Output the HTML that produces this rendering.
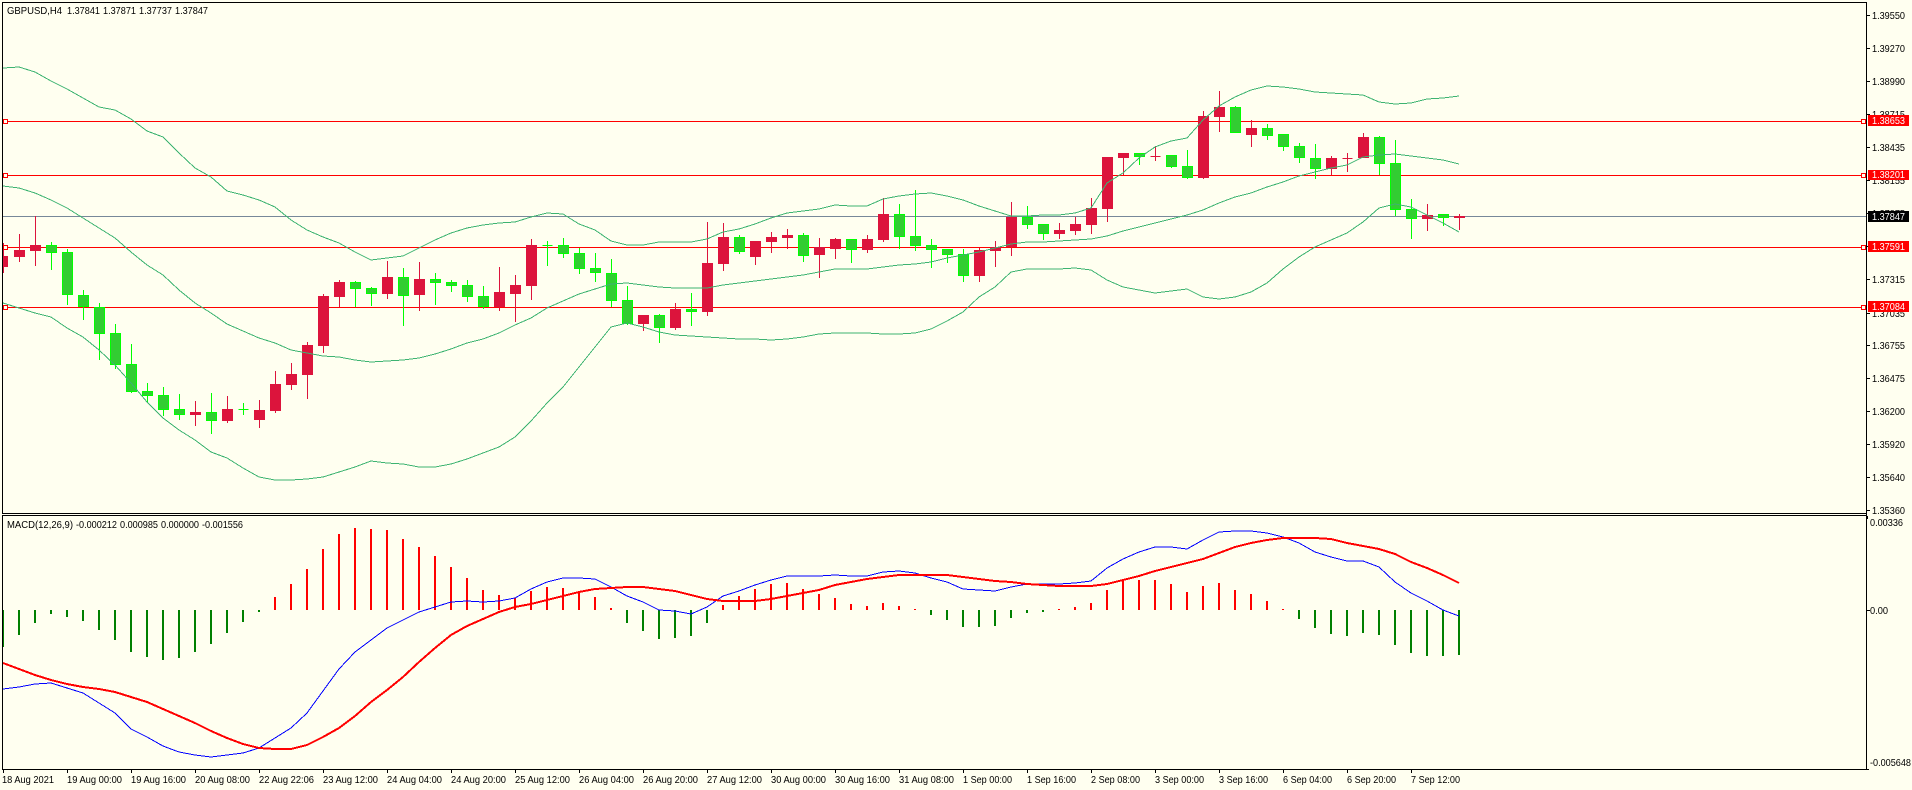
<!DOCTYPE html>
<html><head><meta charset="utf-8"><title>GBPUSD,H4</title>
<style>
html,body{margin:0;padding:0;width:1912px;height:790px;overflow:hidden;background:#FFFFF0}
svg{display:block}
text{font-family:"Liberation Sans",sans-serif;font-size:10.5px;fill:#000}
.w{fill:#fff}
</style></head><body>
<svg width="1912" height="790" viewBox="0 0 1912 790" xmlns="http://www.w3.org/2000/svg">
<rect width="1912" height="790" fill="#FFFFF0"/>
<g shape-rendering="crispEdges">
<!-- horizontal lines -->
<path d="M3 216.5H1866" stroke="#778899" fill="none"/>
<path d="M3 121.5H1866M3 175.5H1866M3 247.5H1866M3 307.5H1866" stroke="#FF0000" fill="none"/>
<!-- wicks -->
<path stroke="#00FF00" fill="none" d="M51.5 242V270M67.5 249V305M83.5 290V320M99.5 303V360M115.5 324V369M131.5 344V393M147.5 383V403M163.5 387V416M179.5 394V420M211.5 393V434M243.5 403V415M355.5 281V307M371.5 287V306M403.5 268V326M435.5 273V305M451.5 280V292M467.5 280V302M483.5 286V309M547.5 241V266M563.5 238V258M579.5 248V274M595.5 253V282M611.5 259V307M627.5 286V325M659.5 314V343M691.5 293V326M739.5 235V254M803.5 233V262M851.5 239V263M899.5 204V249M915.5 190V251M931.5 239V268M947.5 249V263M963.5 249V282M1027.5 206V229M1043.5 224V240M1139.5 153V165M1171.5 155V168M1187.5 150V179M1235.5 106V133M1267.5 124V140M1283.5 134V151M1299.5 143V163M1315.5 144V179M1379.5 136V175M1395.5 140V216M1411.5 199V239M1443.5 214V226"/>
<path stroke="#DC143C" fill="none" d="M3.5 243V273M19.5 234V262M35.5 216V266M195.5 401V426M227.5 396V423M259.5 400V428M275.5 371V413M291.5 363V390M307.5 342V399M323.5 294V353M339.5 280V307M387.5 261V299M419.5 262V311M499.5 267V311M515.5 275V322M531.5 239V300M643.5 315V331M675.5 303V330M707.5 222V316M723.5 223V271M755.5 241V265M771.5 232V253M787.5 229V249M819.5 238V278M835.5 238V259M867.5 235V253M883.5 198V242M979.5 248V282M995.5 241V267M1011.5 202V256M1059.5 223V239M1075.5 217V235M1091.5 198V234M1107.5 157V222M1123.5 153V175M1155.5 146V161M1203.5 111V179M1219.5 91V132M1251.5 120V147M1331.5 156V175M1347.5 153V172M1363.5 133V158M1427.5 204V231M1459.5 214V230"/>
<!-- green bodies -->
<path stroke="#00FF00" fill="#32CD32" d="M46.5 245.5h10V252.5h-10zM62.5 252.5h10V294.5h-10zM78.5 295.5h10V306.5h-10zM94.5 307.5h10V333.5h-10zM110.5 333.5h10V364.5h-10zM126.5 364.5h10V391.5h-10zM142.5 391.5h10V395.5h-10zM158.5 395.5h10V409.5h-10zM174.5 409.5h10V414.5h-10zM206.5 412.5h10V420.5h-10zM238.5 409.5h10zM350.5 282.5h10V288.5h-10zM366.5 288.5h10V293.5h-10zM398.5 277.5h10V295.5h-10zM430.5 279.5h10V282.5h-10zM446.5 282.5h10V285.5h-10zM462.5 285.5h10V296.5h-10zM478.5 296.5h10V306.5h-10zM542.5 245.5h10zM558.5 245.5h10V253.5h-10zM574.5 253.5h10V268.5h-10zM590.5 268.5h10V272.5h-10zM606.5 273.5h10V300.5h-10zM622.5 300.5h10V323.5h-10zM654.5 315.5h10V327.5h-10zM686.5 309.5h10V311.5h-10zM734.5 237.5h10V251.5h-10zM798.5 235.5h10V255.5h-10zM846.5 239.5h10V249.5h-10zM894.5 214.5h10V236.5h-10zM910.5 236.5h10V245.5h-10zM926.5 245.5h10V249.5h-10zM942.5 249.5h10V254.5h-10zM958.5 254.5h10V275.5h-10zM1022.5 217.5h10V224.5h-10zM1038.5 224.5h10V233.5h-10zM1134.5 153.5h10V156.5h-10zM1166.5 155.5h10V166.5h-10zM1182.5 166.5h10V177.5h-10zM1230.5 107.5h10V132.5h-10zM1262.5 128.5h10V135.5h-10zM1278.5 134.5h10V146.5h-10zM1294.5 146.5h10V157.5h-10zM1310.5 158.5h10V168.5h-10zM1374.5 137.5h10V163.5h-10zM1390.5 163.5h10V209.5h-10zM1406.5 209.5h10V218.5h-10zM1438.5 214.5h10V217.5h-10z"/>
<!-- red bodies -->
<path stroke="#DC143C" fill="#DC143C" d="M3.5 256.5H7.5V266.5H3.5zM14.5 250.5h10V256.5h-10zM30.5 245.5h10V250.5h-10zM190.5 412.5h10V414.5h-10zM222.5 409.5h10V420.5h-10zM254.5 410.5h10V419.5h-10zM270.5 384.5h10V410.5h-10zM286.5 374.5h10V384.5h-10zM302.5 345.5h10V374.5h-10zM318.5 296.5h10V345.5h-10zM334.5 282.5h10V296.5h-10zM382.5 277.5h10V293.5h-10zM414.5 279.5h10V294.5h-10zM494.5 292.5h10V306.5h-10zM510.5 285.5h10V293.5h-10zM526.5 245.5h10V285.5h-10zM638.5 315.5h10V323.5h-10zM670.5 309.5h10V327.5h-10zM702.5 263.5h10V311.5h-10zM718.5 237.5h10V263.5h-10zM750.5 241.5h10V256.5h-10zM766.5 237.5h10V241.5h-10zM782.5 235.5h10V237.5h-10zM814.5 247.5h10V254.5h-10zM830.5 239.5h10V248.5h-10zM862.5 239.5h10V249.5h-10zM878.5 214.5h10V239.5h-10zM974.5 250.5h10V275.5h-10zM990.5 247.5h10V250.5h-10zM1006.5 217.5h10V246.5h-10zM1054.5 230.5h10V233.5h-10zM1070.5 224.5h10V230.5h-10zM1086.5 208.5h10V224.5h-10zM1102.5 157.5h10V208.5h-10zM1118.5 153.5h10V157.5h-10zM1150.5 156.5h10zM1198.5 116.5h10V177.5h-10zM1214.5 107.5h10V116.5h-10zM1246.5 128.5h10V134.5h-10zM1326.5 158.5h10V168.5h-10zM1342.5 158.5h10zM1358.5 137.5h10V157.5h-10zM1422.5 215.5h10V218.5h-10zM1454.5 216.5h10V217.5h-10z"/>
</g>
<!-- Bollinger bands -->
<g fill="none" stroke="#3CB371" stroke-width="1" shape-rendering="crispEdges">
<polyline points="3,68 19,67 35,72 51,81 67,89 83,98 99,107 115,110 131,119 147,131 163,137 179,153 195,168 211,177 227,191 243,195 259,200 275,207 291,220 307,230 323,237 339,243 355,252 371,260 387,258 403,256 419,248 435,240 451,233 467,228 483,225 499,223 515,222 531,217 547,213 563,214 579,224 595,230 611,241 627,245 643,245 659,242 675,242 691,242 707,239 723,232 739,229 755,224 771,218 787,213 803,211 819,209 835,205 851,206 867,206 883,199 899,196 915,194 931,193 947,196 963,200 979,206 995,211 1011,216 1027,216 1043,215 1059,215 1075,213 1091,208 1107,183 1123,173 1139,158 1155,147 1171,141 1187,138 1203,120 1219,106 1235,97 1251,90 1267,86 1283,87 1299,89 1315,92 1331,93 1347,94 1363,95 1379,102 1395,104 1411,103 1427,99 1443,98 1459,96"/>
<polyline points="3,186 19,188 35,193 51,200 67,208 83,218 99,228 115,238 131,252 147,265 163,275 179,290 195,303 211,313 227,324 243,331 259,338 275,343 291,350 307,353 323,356 339,357 355,360 371,362 387,361 403,360 419,358 435,354 451,349 467,343 483,339 499,333 515,325 531,318 547,308 563,301 579,294 595,289 611,284 627,283 643,285 659,287 675,288 691,288 707,288 723,285 739,283 755,281 771,279 787,277 803,275 819,272 835,269 851,269 867,269 883,267 899,265 915,264 931,262 947,258 963,255 979,252 995,248 1011,244 1027,242 1043,242 1059,241 1075,240 1091,239 1107,236 1123,231 1139,227 1155,223 1171,219 1187,215 1203,210 1219,203 1235,197 1251,193 1267,187 1283,182 1299,176 1315,172 1331,168 1347,165 1363,157 1379,155 1395,154 1411,156 1427,158 1443,160 1459,164"/>
<polyline points="3,303 19,308 35,313 51,317 67,328 83,337 99,350 115,365 131,383 147,402 163,418 179,430 195,440 211,452 227,458 243,468 259,477 275,480 291,480 307,479 323,477 339,472 355,467 371,461 387,463 403,464 419,467 435,467 451,464 467,459 483,453 499,447 515,437 531,421 547,403 563,387 579,367 595,347 611,327 627,323 643,327 659,332 675,335 691,336 707,337 723,338 739,339 755,339 771,340 787,339 803,337 819,334 835,333 851,333 867,333 883,334 899,334 915,333 931,329 947,321 963,312 979,297 995,287 1011,272 1027,269 1043,269 1059,269 1075,268 1091,270 1107,280 1123,287 1139,290 1155,293 1171,291 1187,289 1203,297 1219,299 1235,297 1251,292 1267,283 1283,269 1299,257 1315,247 1331,240 1347,233 1363,222 1379,208 1395,204 1411,207 1427,215 1443,223 1459,232"/>
</g>
<!-- MACD histogram -->
<g fill="none" stroke-width="2" shape-rendering="crispEdges">
<path stroke="#008000" stroke-width="1" d="M3.5 610V647"/>
<path stroke="#008000" d="M19 610V635M35 610V623M51 610V614M67 610V617M83 610V621M99 610V630M115 610V640M131 610V652M147 610V657M163 610V660M179 610V658M195 610V652M211 610V644M227 610V633M243 610V622M259 610V612M627 610V623M643 610V631M659 610V639M675 610V638M691 610V636M707 610V623M931 610V615M947 610V620M963 610V627M979 610V627M995 610V626M1011 610V618M1027 610V613M1043 610V612M1299 610V619M1315 610V628M1331 610V634M1347 610V636M1363 610V633M1379 610V635M1395 610V645M1411 610V653M1427 610V656M1443 610V656M1459 610V655"/>
<path stroke="#FF0000" d="M275 610V597M291 610V584M307 610V569M323 610V549M339 610V534M355 610V528M371 610V529M387 610V530M403 610V539M419 610V547M435 610V556M451 610V567M467 610V578M483 610V590M499 610V595M515 610V598M531 610V591M547 610V587M563 610V588M579 610V592M595 610V597M611 610V608M723 610V605M739 610V596M755 610V589M771 610V584M787 610V583M803 610V589M819 610V594M835 610V598M851 610V604M867 610V606M883 610V603M899 610V606M915 610V609M1059 610V609M1075 610V607M1091 610V603M1107 610V590M1123 610V581M1139 610V580M1155 610V580M1171 610V584M1187 610V592M1203 610V586M1219 610V583M1235 610V590M1251 610V594M1267 610V601M1283 610V609"/>
</g>
<!-- MACD lines -->
<g fill="none" shape-rendering="crispEdges">
<polyline stroke="#0000FF" stroke-width="1" points="3,689 19,687 35,684 51,683 67,688 83,693 99,703 115,713 131,729 147,737 163,746 179,752 195,755 211,757 227,755 243,753 259,748 275,738 291,728 307,713 323,691 339,669 355,652 371,640 387,628 403,620 419,612 435,607 451,602 467,601 483,602 499,601 515,598 531,589 547,582 563,578 579,578 595,579 611,587 627,596 643,602 659,610 675,611 691,614 707,607 723,596 739,591 755,585 771,580 787,576 803,576 819,576 835,575 851,576 867,576 883,572 899,571 915,573 931,578 947,582 963,589 979,590 995,591 1011,587 1027,584 1043,584 1059,584 1075,583 1091,581 1107,568 1123,559 1139,552 1155,547 1171,547 1187,549 1203,540 1219,532 1235,531 1251,531 1267,533 1283,537 1299,543 1315,552 1331,557 1347,561 1363,561 1379,567 1395,582 1411,593 1427,601 1443,610 1459,616"/>
<polyline stroke="#FF0000" stroke-width="2" points="3,663 19,669 35,675 51,680 67,684 83,687 99,689 115,692 131,697 147,702 163,709 179,716 195,723 211,731 227,738 243,744 259,748 275,749 291,749 307,745 323,737 339,728 355,716 371,702 387,690 403,677 419,662 435,648 451,635 467,626 483,619 499,612 515,607 531,604 547,600 563,596 579,592 595,589 611,588 627,587 643,587 659,589 675,591 691,595 707,599 723,601 739,601 755,601 771,599 787,596 803,593 819,590 835,585 851,582 867,579 883,577 899,575 915,575 931,575 947,575 963,577 979,579 995,581 1011,582 1027,584 1043,585 1059,586 1075,586 1091,586 1107,584 1123,580 1139,576 1155,571 1171,567 1187,563 1203,559 1219,553 1235,547 1251,543 1267,540 1283,538 1299,538 1315,538 1331,539 1347,543 1363,546 1379,549 1395,554 1411,562 1427,568 1443,575 1459,583"/>
</g>
<!-- frame -->
<g shape-rendering="crispEdges" fill="none" stroke="#000">
<path d="M2.5 2V514M2.5 515V770M2 2.5H1867M2 513.5H1867M2 515.5H1867M2 769.5H1867M1866.5 2V770"/>
<path d="M1866 15.5h4M1866 48.5h4M1866 81.5h4M1866 114.5h4M1866 147.5h4M1866 180.5h4M1866 213.5h4M1866 246.5h4M1866 279.5h4M1866 313.5h4M1866 345.5h4M1866 378.5h4M1866 411.5h4M1866 444.5h4M1866 477.5h4M1866 510.5h4M1866 610.5h4M1866 769.5h3M1867.5 516V519"/>
<path d="M3.5 770v3M67.5 770v3M131.5 770v3M195.5 770v3M259.5 770v3M323.5 770v3M387.5 770v3M451.5 770v3M515.5 770v3M579.5 770v3M643.5 770v3M707.5 770v3M771.5 770v3M835.5 770v3M899.5 770v3M963.5 770v3M1027.5 770v3M1091.5 770v3M1155.5 770v3M1219.5 770v3M1283.5 770v3M1347.5 770v3M1411.5 770v3"/>
</g>
<!-- header texts -->
<text x="7" y="14" textLength="55" lengthAdjust="spacingAndGlyphs">GBPUSD,H4</text>
<text x="67" y="14" textLength="33" lengthAdjust="spacingAndGlyphs">1.37841</text>
<text x="103" y="14" textLength="33" lengthAdjust="spacingAndGlyphs">1.37871</text>
<text x="139" y="14" textLength="33" lengthAdjust="spacingAndGlyphs">1.37737</text>
<text x="175" y="14" textLength="33" lengthAdjust="spacingAndGlyphs">1.37847</text>
<text x="7" y="528" textLength="66" lengthAdjust="spacingAndGlyphs">MACD(12,26,9)</text>
<text x="76" y="528" textLength="41" lengthAdjust="spacingAndGlyphs">-0.000212</text>
<text x="120" y="528" textLength="38" lengthAdjust="spacingAndGlyphs">0.000985</text>
<text x="161" y="528" textLength="38" lengthAdjust="spacingAndGlyphs">0.000000</text>
<text x="202" y="528" textLength="41" lengthAdjust="spacingAndGlyphs">-0.001556</text>
<!-- price axis -->
<g>
<text x="1872" y="19" textLength="33" lengthAdjust="spacingAndGlyphs">1.39550</text>
<text x="1872" y="52" textLength="33" lengthAdjust="spacingAndGlyphs">1.39270</text>
<text x="1872" y="85" textLength="33" lengthAdjust="spacingAndGlyphs">1.38990</text>
<text x="1872" y="118" textLength="33" lengthAdjust="spacingAndGlyphs">1.38715</text>
<text x="1872" y="151" textLength="33" lengthAdjust="spacingAndGlyphs">1.38435</text>
<text x="1872" y="184" textLength="33" lengthAdjust="spacingAndGlyphs">1.38155</text>
<text x="1872" y="217" textLength="33" lengthAdjust="spacingAndGlyphs">1.37875</text>
<text x="1872" y="250" textLength="33" lengthAdjust="spacingAndGlyphs">1.37595</text>
<text x="1872" y="283" textLength="33" lengthAdjust="spacingAndGlyphs">1.37315</text>
<text x="1872" y="317" textLength="33" lengthAdjust="spacingAndGlyphs">1.37035</text>
<text x="1872" y="349" textLength="33" lengthAdjust="spacingAndGlyphs">1.36755</text>
<text x="1872" y="382" textLength="33" lengthAdjust="spacingAndGlyphs">1.36475</text>
<text x="1872" y="415" textLength="33" lengthAdjust="spacingAndGlyphs">1.36200</text>
<text x="1872" y="448" textLength="33" lengthAdjust="spacingAndGlyphs">1.35920</text>
<text x="1872" y="481" textLength="33" lengthAdjust="spacingAndGlyphs">1.35640</text>
<text x="1872" y="514" textLength="33" lengthAdjust="spacingAndGlyphs">1.35360</text>
<text x="1870" y="526" textLength="33" lengthAdjust="spacingAndGlyphs">0.00336</text>
<text x="1870" y="614" textLength="18" lengthAdjust="spacingAndGlyphs">0.00</text>
<text x="1870" y="766" textLength="41" lengthAdjust="spacingAndGlyphs">-0.005648</text>
</g>
<!-- price tags -->
<g shape-rendering="crispEdges">
<rect x="1868" y="115" width="41" height="11" fill="#FF0000"/>
<rect x="1868" y="170" width="41" height="10" fill="#FF0000"/>
<rect x="1868" y="211" width="41" height="11" fill="#000"/>
<rect x="1868" y="241" width="41" height="11" fill="#FF0000"/>
<rect x="1868" y="301" width="41" height="11" fill="#FF0000"/>
</g>
<text class="w" x="1872" y="124" textLength="33" lengthAdjust="spacingAndGlyphs">1.38653</text>
<text class="w" x="1872" y="178" textLength="33" lengthAdjust="spacingAndGlyphs">1.38201</text>
<text class="w" x="1872" y="220" textLength="33" lengthAdjust="spacingAndGlyphs">1.37847</text>
<text class="w" x="1872" y="250" textLength="33" lengthAdjust="spacingAndGlyphs">1.37591</text>
<text class="w" x="1872" y="310" textLength="33" lengthAdjust="spacingAndGlyphs">1.37084</text>
<!-- line handles -->
<g shape-rendering="crispEdges" fill="#FFFFF0" stroke="#FF0000">
<path d="M3.5 119.5h4v4h-4zM3.5 173.5h4v4h-4zM3.5 245.5h4v4h-4zM3.5 305.5h4v4h-4z"/>
<path d="M1861.5 119.5h4v4h-4zM1861.5 173.5h4v4h-4zM1861.5 245.5h4v4h-4zM1861.5 305.5h4v4h-4z"/>
</g>
<!-- time axis -->
<g>
<text x="2" y="783" textLength="52" lengthAdjust="spacingAndGlyphs">18 Aug 2021</text>
<text x="67" y="783" textLength="55" lengthAdjust="spacingAndGlyphs">19 Aug 00:00</text>
<text x="131" y="783" textLength="55" lengthAdjust="spacingAndGlyphs">19 Aug 16:00</text>
<text x="195" y="783" textLength="55" lengthAdjust="spacingAndGlyphs">20 Aug 08:00</text>
<text x="259" y="783" textLength="55" lengthAdjust="spacingAndGlyphs">22 Aug 22:06</text>
<text x="323" y="783" textLength="55" lengthAdjust="spacingAndGlyphs">23 Aug 12:00</text>
<text x="387" y="783" textLength="55" lengthAdjust="spacingAndGlyphs">24 Aug 04:00</text>
<text x="451" y="783" textLength="55" lengthAdjust="spacingAndGlyphs">24 Aug 20:00</text>
<text x="515" y="783" textLength="55" lengthAdjust="spacingAndGlyphs">25 Aug 12:00</text>
<text x="579" y="783" textLength="55" lengthAdjust="spacingAndGlyphs">26 Aug 04:00</text>
<text x="643" y="783" textLength="55" lengthAdjust="spacingAndGlyphs">26 Aug 20:00</text>
<text x="707" y="783" textLength="55" lengthAdjust="spacingAndGlyphs">27 Aug 12:00</text>
<text x="771" y="783" textLength="55" lengthAdjust="spacingAndGlyphs">30 Aug 00:00</text>
<text x="835" y="783" textLength="55" lengthAdjust="spacingAndGlyphs">30 Aug 16:00</text>
<text x="899" y="783" textLength="55" lengthAdjust="spacingAndGlyphs">31 Aug 08:00</text>
<text x="963" y="783" textLength="49" lengthAdjust="spacingAndGlyphs">1 Sep 00:00</text>
<text x="1027" y="783" textLength="49" lengthAdjust="spacingAndGlyphs">1 Sep 16:00</text>
<text x="1091" y="783" textLength="49" lengthAdjust="spacingAndGlyphs">2 Sep 08:00</text>
<text x="1155" y="783" textLength="49" lengthAdjust="spacingAndGlyphs">3 Sep 00:00</text>
<text x="1219" y="783" textLength="49" lengthAdjust="spacingAndGlyphs">3 Sep 16:00</text>
<text x="1283" y="783" textLength="49" lengthAdjust="spacingAndGlyphs">6 Sep 04:00</text>
<text x="1347" y="783" textLength="49" lengthAdjust="spacingAndGlyphs">6 Sep 20:00</text>
<text x="1411" y="783" textLength="49" lengthAdjust="spacingAndGlyphs">7 Sep 12:00</text>
</g>
</svg>
</body></html>
